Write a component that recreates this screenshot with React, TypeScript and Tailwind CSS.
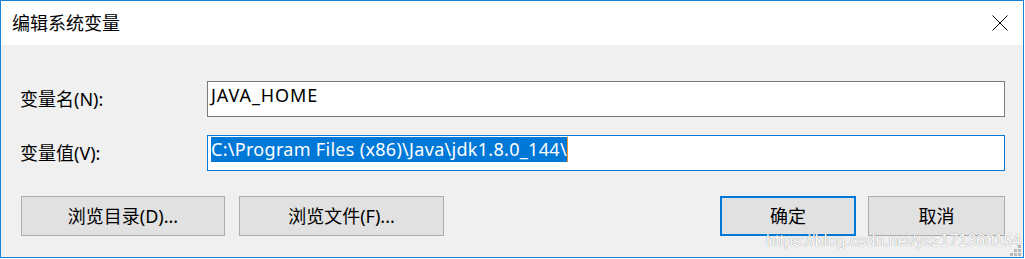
import React from "react";

const ui = "font-['Noto_Sans','Noto_Sans_CJK_SC',sans-serif]";

function CloseIcon() {
  return (
    <svg width="16" height="16" viewBox="0 0 16 16" className="block">
      <path d="M0.5 0.5 L15.5 15.5 M15.5 0.5 L0.5 15.5" stroke="#000" strokeWidth="1" fill="none" />
    </svg>
  );
}

function Grip() {
  const dots = [
    [8, 0],
    [4, 4],
    [8, 4],
    [0, 8],
    [4, 8],
    [8, 8],
  ];
  return (
    <svg width="11" height="11" viewBox="0 0 11 11" className="block">
      {dots.map(([x, y]) => (
        <rect key={`${x}-${y}`} x={x} y={y} width="3" height="3" fill="#b8b8b8" />
      ))}
    </svg>
  );
}

function Btn({ children, primary, w }: { children: React.ReactNode; primary?: boolean; w: string }) {
  return (
    <button
      className={
        primary
          ? `${w} h-10 bg-[#e1e1e1] border-2 border-[#0078d7] text-[18px] text-black flex items-center justify-center`
          : `${w} h-10 bg-[#e1e1e1] border border-[#adadad] text-[18px] text-black flex items-center justify-center`
      }
    >
      {children}
    </button>
  );
}

export default function App() {
  return (
    <div className={`${ui} w-[1025px] h-[259px] bg-white`}>
      <div className="relative w-[1024px] h-[258px] border border-[#1883d7] flex flex-col">
        {/* title bar */}
        <div className="h-[44px] bg-white flex items-center justify-between pl-[11px] pr-[15px]">
          <span className="text-[18px] text-black leading-none">编辑系统变量</span>
          <CloseIcon />
        </div>

        {/* body */}
        <div className="flex-1 bg-[#f0f0f0] pl-[19px] pr-[18px] pt-[36px]">
          <div className="flex items-center">
            <span className="w-[187px] text-[18px] text-black">变量名(N):</span>
            <div className="w-[798px] h-[36px] bg-white border border-[#7a7a7a] flex items-start pt-[1px] pl-[3px]">
              <span className="text-[18px] leading-[25px] tracking-[0.9px] text-black">JAVA_HOME</span>
            </div>
          </div>
          <div className="flex items-center mt-[18px]">
            <span className="w-[187px] text-[18px] text-black">变量值(V):</span>
            <div className="w-[798px] h-[36px] bg-white border border-[#0078d7] flex items-start pt-[1px] pl-[3px]">
              <span className="text-[18px] leading-[25px] tracking-[0.3px] text-white bg-[#0078d7]">
                C:\Program Files (x86)\Java\jdk1.8.0_144\
              </span>
              <span className="w-px h-[25px] bg-[#f7931e]" />
            </div>
          </div>
          <div className="flex items-center mt-[25px] pl-px">
            <div className="flex gap-[14px]">
              <Btn w="w-[204px]">浏览目录(D)...</Btn>
              <Btn w="w-[205px]">浏览文件(F)...</Btn>
            </div>
            <div className="ml-auto flex gap-[12px]">
              <Btn w="w-[136px]" primary>
                确定
              </Btn>
              <Btn w="w-[137px]">取消</Btn>
            </div>
          </div>
        </div>

        {/* watermark */}
        <span className="absolute left-[765px] top-[228px] font-['Liberation_Sans',sans-serif] text-[16px] tracking-[0.1px] text-white [text-shadow:0_0_1px_rgba(0,0,0,0.55)] whitespace-nowrap">
          https://blog.csdn.net/ysz171360154
        </span>
        <div className="absolute right-[2px] bottom-[1px]">
          <Grip />
        </div>
      </div>
    </div>
  );
}
